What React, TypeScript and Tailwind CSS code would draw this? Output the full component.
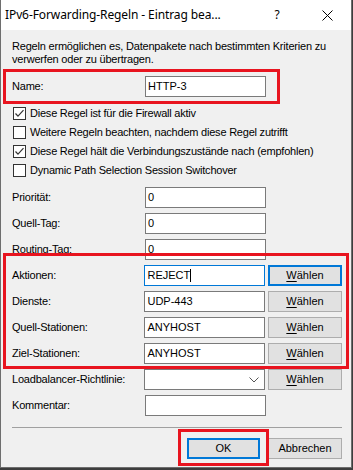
import React from "react";

const Check = ({ checked }: { checked: boolean }) => (
  <svg width="13" height="13" viewBox="0 0 13 13" className="shrink-0">
    <rect x="0.5" y="0.5" width="12" height="12" fill="#ffffff" stroke="#333333" />
    {checked && (
      <polyline points="2.5,6.5 5,9.2 10.5,3.2" fill="none" stroke="#333333" strokeWidth="1.2" />
    )}
  </svg>
);

const Btn = ({ focused, children, w = "w-[74px]" }: { focused?: boolean; children: React.ReactNode; w?: string }) => (
  <div
    className={`${w} h-[21px] flex items-center justify-center bg-[#e1e1e1] text-[11px] text-black ${
      focused ? "border-2 border-[#0078d7]" : "border border-[#adadad]"
    }`}
  >
    {children}
  </div>
);

const Waehlen = ({ focused }: { focused?: boolean }) => (
  <Btn focused={focused}>
    <span>
      <span className="underline underline-offset-[2px]">W</span>ählen
    </span>
  </Btn>
);

const Field = ({
  label,
  value,
  focused,
  cursor,
  button,
  buttonFocused,
  select,
}: {
  label: string;
  value?: string;
  focused?: boolean;
  cursor?: boolean;
  button?: boolean;
  buttonFocused?: boolean;
  select?: boolean;
}) => (
  <div className="flex items-center h-[21px]">
    <div className="w-[133px] text-[11px] text-black leading-none tracking-[-0.2px]">{label}</div>
    <div
      className={`w-[121px] h-[21px] bg-white flex items-center pl-[2px] text-[11px] text-black ${
        focused ? "border border-[#0078d7]" : "border border-[#7a7a7a]"
      }`}
    >
      <span>{value}</span>
      {cursor && <span className="inline-block w-px h-[13px] bg-black" />}
      {select && (
        <svg width="10" height="6" viewBox="0 0 10 6" className="ml-auto mr-[5px]">
          <polyline points="0.5,0.5 5,5 9.5,0.5" fill="none" stroke="#555555" strokeWidth="1" />
        </svg>
      )}
    </div>
    {button && (
      <div className="ml-[3px]">
        <Waehlen focused={buttonFocused} />
      </div>
    )}
  </div>
);

const CheckRow = ({ checked, text }: { checked: boolean; text: string }) => (
  <div className="flex items-center h-[19px] pl-[1px]">
    <Check checked={checked} />
    <span className="ml-[4px] text-[11px] text-black leading-none tracking-[-0.22px]">{text}</span>
  </div>
);

export default function App() {
  return (
    <div className="relative w-[353px] h-[470px] bg-[#3d3d3d] overflow-hidden font-['Liberation_Sans',Arial,sans-serif]">
      <div className="w-[352px] h-[468px] bg-[#f0f0f0] border-l border-r border-b border-[#6e6e6e] flex flex-col">
        <div className="h-[30px] bg-white flex items-center pl-[4px] shrink-0">
          <span className="text-[12px] text-black font-['Noto_Sans','Open_Sans',sans-serif] tracking-[-0.1px]">
            IPv6-Forwarding-Regeln - Eintrag bea...
          </span>
          <div className="flex-1" />
          <span className="w-[10px] text-center text-[12px] text-black font-['Noto_Sans',sans-serif]">?</span>
          <div className="w-[40px]" />
          <svg width="11" height="11" viewBox="0 0 11 11" className="mr-[18px]">
            <line x1="0.5" y1="0.5" x2="10.5" y2="10.5" stroke="#000" strokeWidth="1" />
            <line x1="10.5" y1="0.5" x2="0.5" y2="10.5" stroke="#000" strokeWidth="1" />
          </svg>
        </div>
        <div className="flex flex-col pl-[11px] pr-[9px]">
          <p className="mt-[10px] text-[11px] leading-[13px] text-black tracking-[-0.2px]">
            Regeln ermöglichen es, Datenpakete nach bestimmten Kriterien zu
            <br />
            verwerfen oder zu übertragen.
          </p>
          <div className="mt-[10px]">
            <Field label="Name:" value="HTTP-3" />
          </div>
          <div className="mt-[7px] flex flex-col">
            <CheckRow checked text="Diese Regel ist für die Firewall aktiv" />
            <CheckRow checked={false} text="Weitere Regeln beachten, nachdem diese Regel zutrifft" />
            <CheckRow checked text="Diese Regel hält die Verbindungszustände nach (empfohlen)" />
            <CheckRow checked={false} text="Dynamic Path Selection Session Switchover" />
          </div>
          <div className="mt-[7px] flex flex-col gap-[5px]">
            <Field label="Priorität:" value="0" />
            <Field label="Quell-Tag:" value="0" />
            <Field label="Routing-Tag:" value="0" />
            <Field label="Aktionen:" value="REJECT" focused cursor button buttonFocused />
            <Field label="Dienste:" value="UDP-443" button />
            <Field label="Quell-Stationen:" value="ANYHOST" button />
            <Field label="Ziel-Stationen:" value="ANYHOST" button />
            <Field label="Loadbalancer-Richtlinie:" select button />
            <Field label="Kommentar:" />
          </div>
          <div className="mt-[11px] h-px bg-[#a0a0a0]" />
          <div className="mt-[10px] flex justify-end gap-[8px]">
            <Btn focused w="w-[73px]">OK</Btn>
            <Btn>Abbrechen</Btn>
          </div>
        </div>
      </div>
      <div className="absolute left-[3px] top-[69px] w-[277px] h-[35px] border-[3px] border-[#e8141f]" />
      <div className="absolute left-[3px] top-[253px] w-[346px] h-[116px] border-[3px] border-[#e8141f]" />
      <div className="absolute left-[178px] top-[429px] w-[91px] h-[37px] border-[3px] border-[#e8141f]" />
    </div>
  );
}
